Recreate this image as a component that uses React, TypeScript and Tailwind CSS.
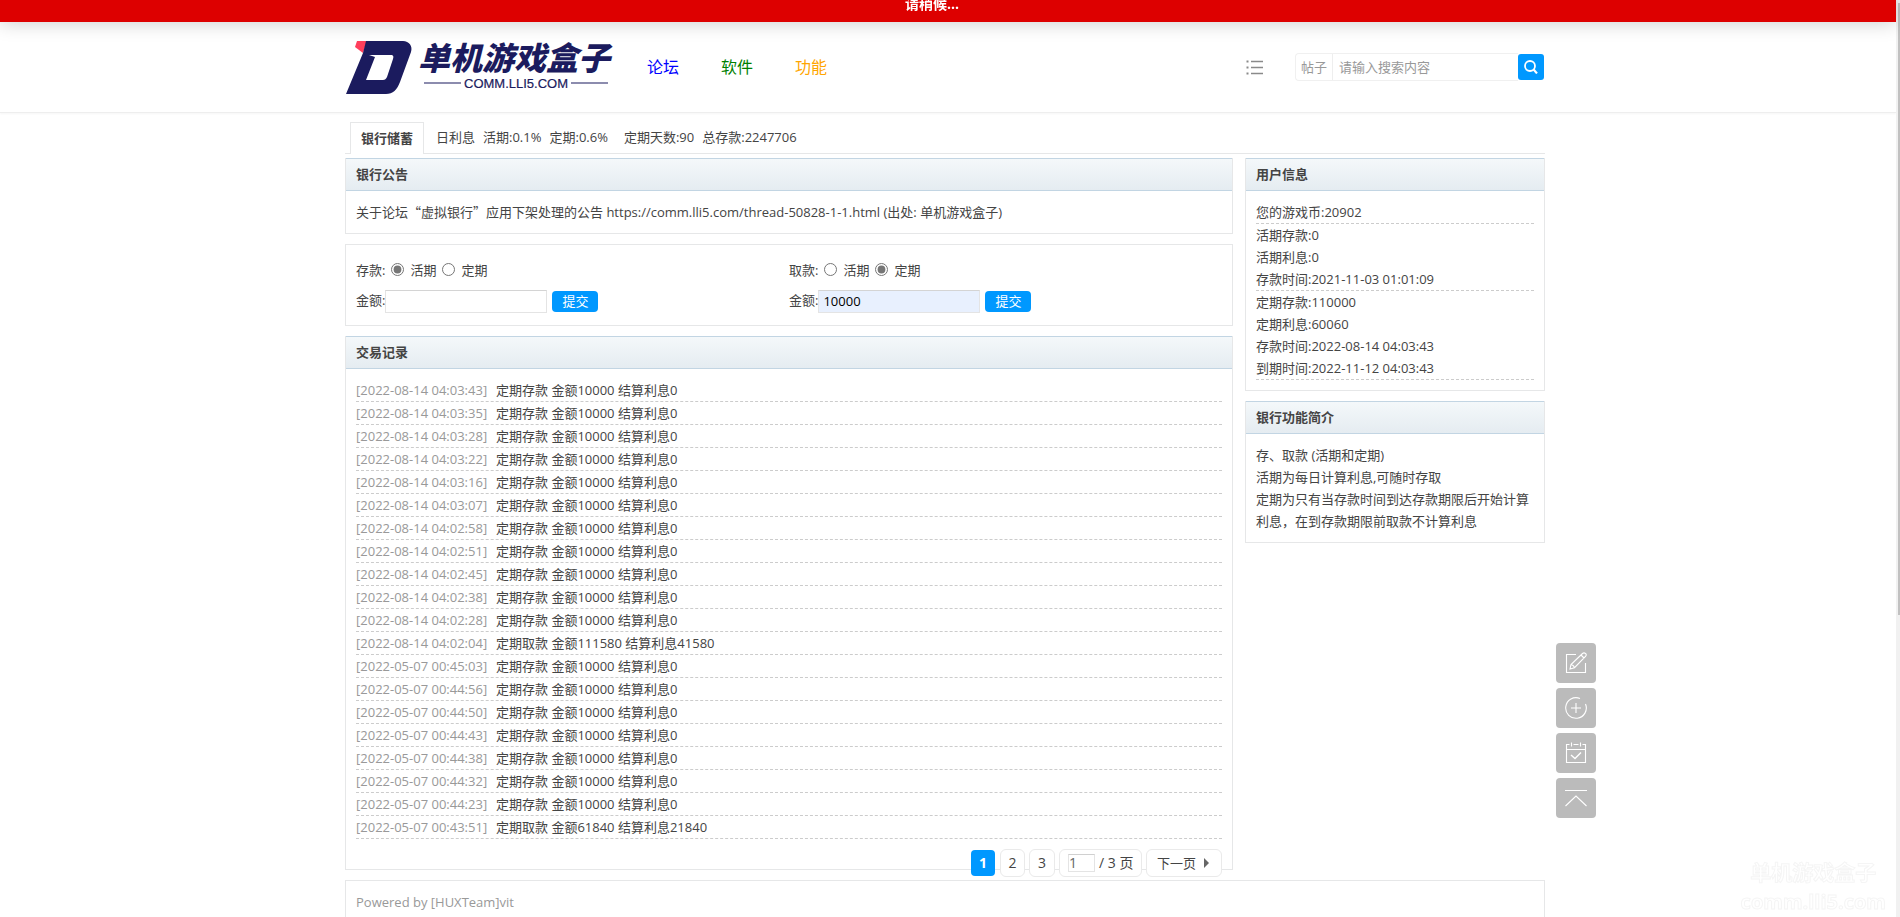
import type { ReactNode } from 'react';

type RecordItem = {
  time: string;
  text: string;
};

const records: RecordItem[] = [
  { time: "2022-08-14 04:03:43", text: "定期存款 金额10000 结算利息0" },
  { time: "2022-08-14 04:03:35", text: "定期存款 金额10000 结算利息0" },
  { time: "2022-08-14 04:03:28", text: "定期存款 金额10000 结算利息0" },
  { time: "2022-08-14 04:03:22", text: "定期存款 金额10000 结算利息0" },
  { time: "2022-08-14 04:03:16", text: "定期存款 金额10000 结算利息0" },
  { time: "2022-08-14 04:03:07", text: "定期存款 金额10000 结算利息0" },
  { time: "2022-08-14 04:02:58", text: "定期存款 金额10000 结算利息0" },
  { time: "2022-08-14 04:02:51", text: "定期存款 金额10000 结算利息0" },
  { time: "2022-08-14 04:02:45", text: "定期存款 金额10000 结算利息0" },
  { time: "2022-08-14 04:02:38", text: "定期存款 金额10000 结算利息0" },
  { time: "2022-08-14 04:02:28", text: "定期存款 金额10000 结算利息0" },
  { time: "2022-08-14 04:02:04", text: "定期取款 金额111580 结算利息41580" },
  { time: "2022-05-07 00:45:03", text: "定期存款 金额10000 结算利息0" },
  { time: "2022-05-07 00:44:56", text: "定期存款 金额10000 结算利息0" },
  { time: "2022-05-07 00:44:50", text: "定期存款 金额10000 结算利息0" },
  { time: "2022-05-07 00:44:43", text: "定期存款 金额10000 结算利息0" },
  { time: "2022-05-07 00:44:38", text: "定期存款 金额10000 结算利息0" },
  { time: "2022-05-07 00:44:32", text: "定期存款 金额10000 结算利息0" },
  { time: "2022-05-07 00:44:23", text: "定期存款 金额10000 结算利息0" },
  { time: "2022-05-07 00:43:51", text: "定期取款 金额61840 结算利息21840" }
];

// Each group is closed by a dashed line
const userInfo: string[][] = [
  ["您的游戏币:20902"],
  ["活期存款:0", "活期利息:0", "存款时间:2021-11-03 01:01:09"],
  ["定期存款:110000", "定期利息:60060", "存款时间:2022-08-14 04:03:43", "到期时间:2022-11-12 04:03:43"]
];

function Logo() {
  return (
    <svg viewBox="0 0 270 56" className="w-[270px] h-14 mt-0.5 shrink-0 overflow-visible" role="img" aria-label="单机游戏盒子">
      <path d="M12 1H22L18 13L10 7Z" fill="#ff3f5c" />
      <path
        fillRule="evenodd"
        fill="#1b1b5e"
        d="M21 1H58C64 1 68 6 66 12L55 42C52 50 48 54 41 54H1L18 13ZM24 15L30 17L21 40H38C40 40 41 39 42 37L48 19C49 16 48 15 46 15Z"
      />
      <text x="73" y="30" fontSize="32" fontWeight="900" fontStyle="italic" fill="#1b1b5e" fontFamily="'Noto Sans CJK SC', sans-serif">单机游戏盒子</text>
      <path d="M79 43H116M226 43H263" stroke="#1b1b5e" strokeWidth="1.2" />
      <text x="119" y="48" fontSize="13" fill="#1b1b5e" stroke="#1b1b5e" strokeWidth="0.2" fontFamily="'Liberation Sans', sans-serif">COMM.LLI5.COM</text>
    </svg>
  );
}

function Panel({ title, children }: { title?: string; children: ReactNode }) {
  return (
    <section className="border border-[#e6e7e8] mb-2.5">
      {title && (
        <h2 className="-mt-px h-[33px] px-2.5 leading-[30px] font-bold border-y border-[#c2d5e3] bg-gradient-to-b from-[#f4f8fa] to-[#e5ecf1]">
          {title}
        </h2>
      )}
      <div className="p-2.5">{children}</div>
    </section>
  );
}

function MoneyForm({ label, name, fixed, amount }: { label: string; name: string; fixed: boolean; amount?: string }) {
  return (
    <form>
      <div className="flex items-center h-[30px]">
        <span>{label}:</span>
        <input id={`${name}-current`} type="radio" name={name} defaultChecked={!fixed} className="size-[13px] mx-1.5 mb-0.5 accent-[#767676]" />
        <label htmlFor={`${name}-current`}>活期</label>
        <input id={`${name}-fixed`} type="radio" name={name} defaultChecked={fixed} className="size-[13px] mx-1.5 mb-0.5 accent-[#767676]" />
        <label htmlFor={`${name}-fixed`}>定期</label>
      </div>
      <div className="flex items-center h-[30px]">
        <label htmlFor={`${name}-amount`}>金额:</label>
        <input
          id={`${name}-amount`}
          type="text"
          defaultValue={amount}
          className={`w-[162px] h-[23px] mt-0.5 px-1 border border-[#e4e4e4] border-t-[#d4d4d4] text-black outline-none ${amount ? "bg-[#e8f0fe]" : "bg-white"}`}
        />
        <button type="button" className="ml-[5px] mt-0.5 w-[46px] h-[21px] leading-[21px] rounded bg-[#0098ff] text-white">提交</button>
      </div>
    </form>
  );
}

function Header() {
  return (
    <header className="h-[91px] border-b border-[#eee] shadow-[0_1px_2px_rgba(0,0,0,0.04)] pr-1.5">
      <div className="w-[1200px] max-w-full mx-auto h-[90px] flex items-center pr-px">
        <Logo />
        <nav className="flex gap-[42px] ml-8 text-base">
          <a href="#forum" className="text-[#0000ff]">论坛</a>
          <a href="#soft" className="text-[#008000]">软件</a>
          <a href="#features" className="text-[#ffa500]">功能</a>
        </nav>
        <button type="button" aria-label="菜单" className="ml-auto mr-8">
          <svg viewBox="0 0 17 17" className="size-[17px]" stroke="#8a8a8a" strokeWidth="1.5">
            <path d="M5 2.5H17M5 8.5H17M5 14.5H17" />
            <path d="M0.5 2.5H2.5M0.5 8.5H2.5M0.5 14.5H2.5" strokeWidth="2" />
          </svg>
        </button>
        <form className="flex items-center w-[249px] text-[#999]">
          <div className="flex flex-1 h-7 border border-r-0 border-[#f0f0f0] rounded-l">
            <button type="button" className="w-[37px] border-r border-[#eee]">帖子</button>
            <input type="text" aria-label="搜索" placeholder="请输入搜索内容" className="flex-1 min-w-0 px-1.5 outline-none placeholder:text-[#999]" />
          </div>
          <button type="button" aria-label="搜索" className="size-[26px] rounded-[3px] bg-[#0098ff] flex items-center justify-center">
            <svg viewBox="0 0 14 14" className="size-3.5" fill="none" stroke="#fff" strokeWidth="1.8">
              <circle cx="6" cy="6" r="5" />
              <path d="M9.6 9.6L13 13.4" strokeWidth="2.2" />
            </svg>
          </button>
        </form>
      </div>
    </header>
  );
}

function Pagination() {
  return (
    <div className="flex justify-end gap-1 h-5 text-[14px]">
      <span className="w-[26px] h-7 p-px shrink-0"><strong className="block w-full h-[26px] leading-[26px] text-center rounded bg-[#0098ff] text-white">1</strong></span>
      <a href="#2" className="w-[25px] h-7 leading-[26px] text-center rounded-md border border-[#eaeaea] bg-white">2</a>
      <a href="#3" className="w-[26px] h-7 leading-[26px] text-center rounded-md border border-[#eaeaea] bg-white">3</a>
      <label className="flex items-center w-[83px] h-7 pl-2 rounded-md border border-[#eaeaea] bg-white whitespace-nowrap">
        <input type="text" defaultValue="1" className="w-[27px] h-[18px] mr-1 border border-[#e4e4e4] border-t-[#d0d0d0] text-[#666] outline-none" />
        / 3 页
      </label>
      <a href="#next" className="flex items-center w-[76px] h-7 pl-2.5 rounded-md border border-[#eaeaea] bg-white text-[13px]">
        下一页
        <svg viewBox="0 0 5 10" className="w-[5px] h-2.5 ml-2" fill="#666"><path d="M0 0L5 5L0 10Z" /></svg>
      </a>
    </div>
  );
}

function SideTools() {
  const button = "size-10 rounded bg-[#bbb] flex items-center justify-center";
  const icon = "size-6";
  const line = { viewBox: "0 0 24 24", fill: "none", stroke: "#fff", strokeWidth: 1.1 };
  return (
    <div className="fixed right-[304px] bottom-[99px] flex flex-col gap-[5px]">
      <button type="button" aria-label="发帖" className={button}>
        <svg {...line} className={icon}>
          <path d="M12 3.5H2.5V21.5H21.5V12" />
          <path d="M6 18L7 13.5L18.5 2.5Q20 1.3 21.5 2.5T21.5 5.5L10.5 16.7ZM7 13.5Q9.8 14 10.5 16.7M17 4L20 7" />
        </svg>
      </button>
      <button type="button" aria-label="添加" className={button}>
        <svg {...line} className={icon}>
          <path d="M16 2.5A10.3 10.3 0 1 0 21.5 8" />
          <path d="M12 7V17M7 12H17" />
        </svg>
      </button>
      <button type="button" aria-label="签到" className={button}>
        <svg {...line} className={icon}>
          <path d="M5.5 3.5H2.5V21.5H21.5V3.5H18.5M9.5 3.5H14.5M2.5 8.5H21.5M7.5 1.5V5.5M16.5 1.5V5.5" />
          <path d="M7 14L11 17.5L17 11.5" strokeWidth="1.4" />
        </svg>
      </button>
      <button type="button" aria-label="返回顶部" className={button}>
        <svg {...line} className={icon}>
          <path d="M1 4.5H23M1.5 20L12 10L22.5 20" />
        </svg>
      </button>
    </div>
  );
}

export default function App() {
  return (
    <div className="h-screen overflow-hidden bg-white pr-1 text-[13px] leading-[22px] text-[#444] font-['Open_Sans','Noto_Sans_CJK_SC',sans-serif]">
      {/* Loading bar */}
      <div className="relative z-10 h-[22px] bg-[#dd0000] pr-8 flex justify-center items-start shadow-[0_0_20px_rgba(0,0,0,0.22)]">
        <span className="-mt-[7px] text-[14px] font-bold text-white">请稍候...</span>
      </div>

      <Header />

      <main className="pr-1.5">
        <div className="w-[1200px] max-w-full mx-auto">
          <div className="flex items-end pt-2 pl-[5px] mb-1 border-b border-[#e6e7e8]">
            <h1 className="w-[74px] h-8 -mb-px leading-[30px] text-center font-bold border border-b-0 border-[#e6e7e8] bg-white">银行储蓄</h1>
            <p className="flex gap-2 ml-3 h-8 leading-[32px]">
              <span>日利息</span>
              <span>活期:0.1%</span>
              <span>定期:0.6%</span>
              <span className="ml-2">定期天数:90</span>
              <span>总存款:2247706</span>
            </p>
          </div>

          <div className="flex items-start gap-3">
            <div className="flex-1 min-w-0">
              <Panel title="银行公告">
                <p>
                  <span className="font-['Noto_Sans_CJK_SC',sans-serif]">关于论坛“虚拟银行”应用下架处理的公告</span> https://comm.lli5.com/thread-50828-1-1.html (出处: 单机游戏盒子)
                </p>
              </Panel>

              <Panel>
                <div className="grid grid-cols-2">
                  <MoneyForm label="存款" name="deposit" fixed={false} />
                  <MoneyForm label="取款" name="withdraw" fixed amount="10000" />
                </div>
              </Panel>

              <Panel title="交易记录">
                <ul className="mb-2.5">
                  {records.map((record) => (
                    <li key={record.time} className="flex h-[23px] border-b border-dashed border-[#ccc]">
                      <span className="w-[140px] text-[#999]">[{record.time}]</span>
                      <span>{record.text}</span>
                    </li>
                  ))}
                </ul>
                <div className="-mb-2.5">
                  <Pagination />
                </div>
              </Panel>
            </div>

            <aside className="w-[300px] shrink-0">
              <Panel title="用户信息">
                {userInfo.map((group) => (
                  <div key={group[0]} className="border-b border-dashed border-[#ccc]">
                    {group.map((row) => (
                      <p key={row}>{row}</p>
                    ))}
                  </div>
                ))}
              </Panel>
              <Panel title="银行功能简介">
                <p>存、取款 (活期和定期)</p>
                <p>活期为每日计算利息,可随时存取</p>
                <p>定期为只有当存款时间到达存款期限后开始计算利息，在到存款期限前取款不计算利息</p>
              </Panel>
            </aside>
          </div>

          <Panel>
            <p className="text-[#999]">Powered by [HUXTeam]vit</p>
          </Panel>
        </div>
      </main>

      <SideTools />

      {/* Site mark */}
      <div className="fixed right-3.5 bottom-0 text-center text-[20px] leading-[30px] font-bold text-white [-webkit-text-stroke:1px_#f5f5f5]">
        <p className="text-[21px]">单机游戏盒子</p>
        <p>comm.lli5.com</p>
      </div>

      {/* Scroll track */}
      <div className="fixed inset-y-0 right-0 w-1 bg-[#f1f1f1] pt-[3px] pl-0.5">
        <div className="h-[67%] bg-[#c1c1c1]"></div>
      </div>
    </div>
  );
}
